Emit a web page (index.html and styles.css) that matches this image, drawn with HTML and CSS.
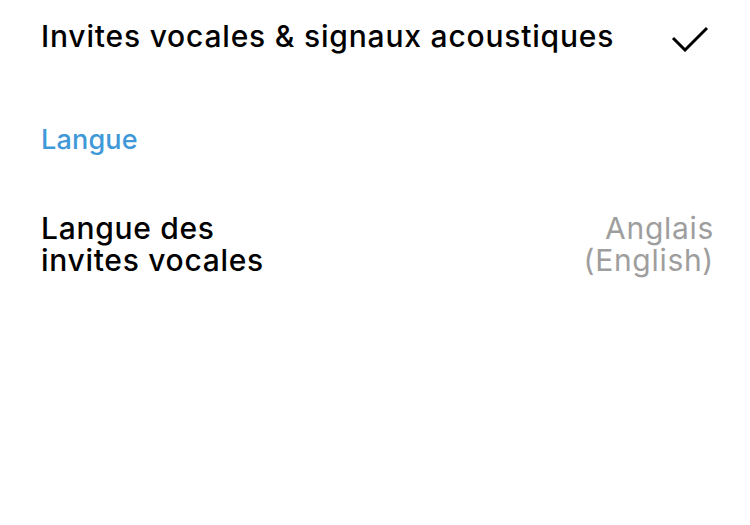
FILE: index.html
```html
<!DOCTYPE html>
<html lang="fr">
<head>
<meta charset="utf-8">
<link rel="stylesheet" href="styles.css">
</head>
<body>
<div class="screen">
  <div class="row row-top">
    <div class="title">Invites vocales &amp; signaux acoustiques</div>
    <svg class="check" width="38" height="26" viewBox="0 0 38 26"><path d="M2 12 L14 24 L36 2" fill="none" stroke="#000" stroke-width="3"/></svg>
  </div>
  <div class="section">Langue</div>
  <div class="row row-lang">
    <div class="label"><span class="line">Langue des</span><span class="line">invites vocales</span></div>
    <div class="value"><span class="line">Anglais</span><span class="line">(English)</span></div>
  </div>
</div>
</body>
</html>
```
FILE: styles.css
```css
html, body { margin: 0; padding: 0; background: #fff; }
body { font-family: Inter, "Noto Sans", sans-serif; color: #000; }
.screen { width: 750px; height: 525px; padding: 16px 36px 0 41px; box-sizing: border-box; }
.row { display: flex; justify-content: space-between; }
.row-top { align-items: flex-start; height: 40px; }
.title { font-size: 30px; font-weight: 500; line-height: 40px; letter-spacing: 0.8px; }
.check { margin-right: 5px; margin-top: 10px; }
.section { margin-top: 66px; font-size: 27px; font-weight: 500; color: #3f98d8; line-height: 36px; letter-spacing: 0.2px; }
.row-lang { margin-top: 54px; font-size: 30px; line-height: 32px; letter-spacing: 0.7px; }
.line { display: block; height: 32px; }
.label { font-weight: 500; }
.value { color: #9e9e9e; text-align: right; font-weight: 400; }
```
